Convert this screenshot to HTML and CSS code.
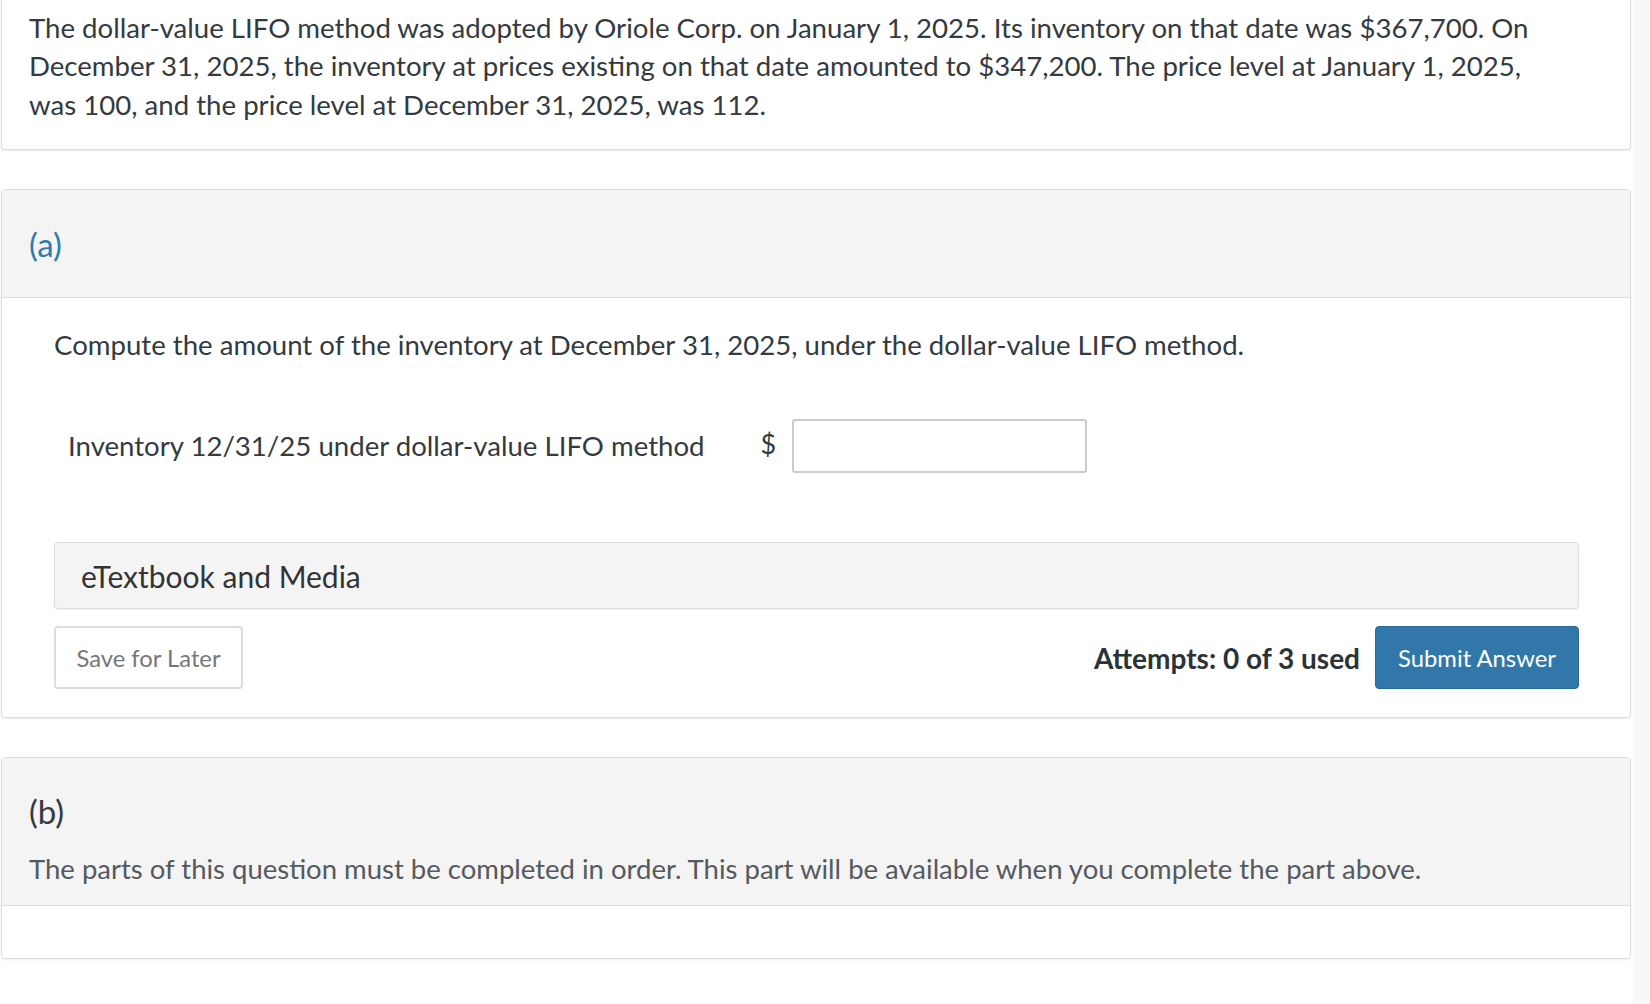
FILE: index.html
```html
<!DOCTYPE html>
<html lang="en">
<head>
<meta charset="utf-8">
<title>Dollar-value LIFO</title>
<link rel="stylesheet" href="styles.css">
</head>
<body>
<div class="page">
  <main class="main">
    <section class="card card-intro">
      <p class="intro">The dollar-value LIFO method was adopted by Oriole Corp. on January 1, 2025. Its inventory on that date was $367,700. On December 31, 2025, the inventory at prices existing on that date amounted to $347,200. The price level at January 1, 2025, was 100, and the price level at December 31, 2025, was 112.</p>
    </section>

    <section class="card part">
      <header class="part-head">
        <h2 class="part-label active">(a)</h2>
      </header>
      <div class="part-body">
        <p class="prompt">Compute the amount of the inventory at December 31, 2025, under the dollar-value LIFO method.</p>
        <div class="answer-row">
          <span class="answer-label">Inventory 12/31/25 under dollar-value LIFO method</span>
          <span class="currency">$</span>
          <input class="answer-input" type="text" aria-label="Inventory 12/31/25">
        </div>
        <div class="media-box">eTextbook and Media</div>
        <div class="actions">
          <button class="btn btn-save" type="button">Save for Later</button>
          <div class="submit-group">
            <span class="attempts">Attempts: 0 of 3 used</span>
            <button class="btn btn-submit" type="button">Submit Answer</button>
          </div>
        </div>
      </div>
    </section>

    <section class="card part">
      <header class="part-head part-head-b">
        <h2 class="part-label">(b)</h2>
        <p class="locked">The parts of this question must be completed in order. This part will be available when you complete the part above.</p>
      </header>
      <div class="part-body-empty"></div>
    </section>
  </main>
  <div class="gutter"></div>
</div>
</body>
</html>
```

FILE: styles.css
```css
* { box-sizing: border-box; }

html, body {
  margin: 0;
  padding: 0;
  background: #ffffff;
}

body {
  font-family: Lato, "Open Sans", "Liberation Sans", sans-serif;
  color: #333a40;
}

.page {
  display: flex;
  min-height: 1004px;
}

.main {
  width: 1633px;
  padding: 0 2px 40px 1px;
  display: flex;
  flex-direction: column;
  gap: 39px;
}

.gutter {
  flex: 1;
  background: #f8f8f8;
}

.card {
  background: #fff;
  border: 1px solid #dcdcdc;
  border-radius: 4px;
  box-shadow: 0 1px 2px rgba(0, 0, 0, 0.08);
}

.card-intro {
  border-top: 0;
  border-top-left-radius: 0;
  border-top-right-radius: 0;
  padding: 9px 80px 25px 27px;
}

.intro {
  margin: 0;
  font-size: 27.6px;
  line-height: 38.4px;
}

.part-head {
  background: #f4f4f4;
  border-bottom: 1px solid #dcdcdc;
  border-radius: 4px 4px 0 0;
  padding: 0 27px;
  height: 108px;
  display: flex;
  flex-direction: column;
  justify-content: center;
}

.part-label {
  margin: 0;
  font-size: 33px;
  font-weight: 400;
  line-height: 40px;
  color: #333a40;
}

.part-label.active {
  color: #2f7ab2;
}

.part-head-b {
  height: auto;
  padding: 33px 27px 17px;
  justify-content: flex-start;
}

.locked {
  margin: 19px 0 0;
  font-size: 27.5px;
  line-height: 38px;
  color: #555a5e;
}

.part-body {
  padding: 28px 51px 28px 52px;
}

.part-body-empty {
  height: 52px;
}

.prompt {
  margin: 0;
  font-size: 27.6px;
  line-height: 38px;
}

.answer-row {
  display: flex;
  align-items: center;
  margin: 55px 0 0 14px;
}

.answer-label {
  font-size: 27.6px;
  line-height: 38px;
}

.currency {
  font-size: 27px;
  margin: -6px 16px 0 56px;
}

.answer-input {
  width: 295px;
  height: 54px;
  border: 2px solid #cccccc;
  border-radius: 3px;
  background: #fff;
  font: inherit;
  font-size: 24px;
  padding: 0 10px;
}

.media-box {
  margin-top: 69px;
  height: 67px;
  background: #f4f4f4;
  border: 1px solid #dcdcdc;
  border-radius: 4px;
  box-shadow: 0 1px 1px rgba(0, 0, 0, 0.06);
  display: flex;
  align-items: center;
  padding: 0 26px;
  font-size: 30px;
  color: #333333;
}

.actions {
  display: flex;
  justify-content: space-between;
  align-items: center;
  margin-top: 17px;
}

.submit-group {
  display: flex;
  align-items: center;
  gap: 15px;
}

.btn {
  font-family: inherit;
  font-size: 23.8px;
  height: 63px;
  border-radius: 4px;
  padding: 0 10px;
  cursor: pointer;
}

.btn-save {
  background: #fff;
  border: 2px solid #dddddd;
  color: #777777;
  width: 189px;
}

.attempts {
  font-size: 28px;
  font-weight: 700;
  color: #2b3338;
}

.btn-submit {
  background: #3177aa;
  border: 1px solid #2a6898;
  color: #ffffff;
  width: 204px;
}
```
